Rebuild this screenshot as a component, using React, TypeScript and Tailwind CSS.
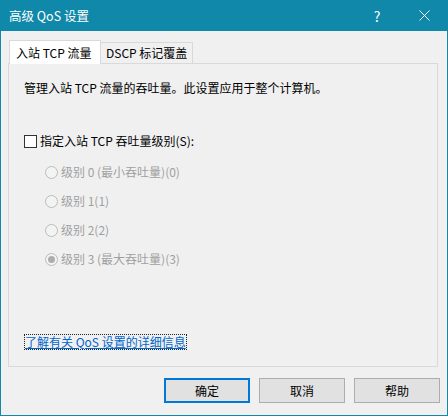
import React from "react";

const font = { fontFamily: '"Noto Sans CJK SC", "Noto Sans", sans-serif' };

function Radio({ label, checked }: { label: string; checked?: boolean }) {
  return (
    <div className="flex items-center h-[16px] ml-[21px]">
      <div className="w-[13px] h-[13px] rounded-full border border-[#bcbcbc] bg-[#f3f3f3] flex items-center justify-center">
        {checked && <div className="w-[7px] h-[7px] rounded-full bg-[#adadad]" />}
      </div>
      <span className="ml-[3px] text-[12px] leading-[16px] text-[#a0a0a0]">{label}</span>
    </div>
  );
}

export default function App() {
  return (
    <div
      className="w-[448px] h-[416px] bg-[#1088a9] px-[1px] pb-[1px] flex flex-col select-none"
      style={font}
    >
      <div className="h-[31px] flex items-center text-white text-[12.5px] leading-[16px] shrink-0">
        <span className="ml-[8px] flex-1">高级 QoS 设置</span>
        <span className="w-[46px] text-center text-[14px] mr-[1px]">?</span>
        <span className="w-[46px] flex items-center justify-center">
          <svg width="11" height="11" viewBox="0 0 11 11">
            <path d="M0.5 0.5 L10.5 10.5 M10.5 0.5 L0.5 10.5" stroke="white" strokeWidth="1" />
          </svg>
        </span>
      </div>
      <div className="flex-1 bg-[#f0f0f0] flex flex-col pl-[7px] pr-[7px]">
        <div className="flex items-start mt-[9px] relative z-10 h-[24px] -mb-[1px]">
          <div className="ml-[1px] w-[92px] h-[24px] border border-b-0 border-[#d9d9d9] bg-white flex items-center pl-[6px] text-[12px] leading-[16px] text-black">
            入站 TCP 流量
          </div>
          <div className="mt-[2px] w-[92px] h-[21px] border border-l-0 border-b-0 border-[#d9d9d9] bg-[#f0f0f0] flex items-center pl-[5px] text-[12px] leading-[16px] text-black">
            DSCP 标记覆盖
          </div>
        </div>
        <div className="w-[430px] h-[304px] border border-[#d9d9d9] bg-[#f0f0f0] flex flex-col pl-[15px] pt-[16px] pb-[16px]">
          <div className="text-[12px] leading-[16px] text-black">
            管理入站 TCP 流量的吞吐量。此设置应用于整个计算机。
          </div>
          <div className="flex items-center h-[16px] mt-[37px]">
            <div className="w-[13px] h-[13px] border border-[#333333] bg-white" />
            <span className="ml-[3px] text-[12px] leading-[16px] text-black">指定入站 TCP 吞吐量级别(S):</span>
          </div>
          <div className="flex flex-col gap-[13px] mt-[15px]">
            <Radio label="级别 0 (最小吞吐量)(0)" />
            <Radio label="级别 1(1)" />
            <Radio label="级别 2(2)" />
            <Radio label="级别 3 (最大吞吐量)(3)" checked />
          </div>
          <div className="mt-auto flex">
            <span className="border border-dotted border-[#222] text-[12px] leading-[14px] text-[#0066cc] underline">
              了解有关 QoS 设置的详细信息
            </span>
          </div>
        </div>
        <div className="flex justify-end gap-[9px] mt-[11px]">
          <button className="w-[86px] h-[25px] border-2 border-[#0078d7] bg-[#e1e1e1] text-[12px] leading-[16px] text-black">
            确定
          </button>
          <button className="w-[86px] h-[25px] border border-[#adadad] bg-[#e1e1e1] text-[12px] leading-[16px] text-black">
            取消
          </button>
          <button className="w-[86px] h-[25px] border border-[#adadad] bg-[#e1e1e1] text-[12px] leading-[16px] text-black">
            帮助
          </button>
        </div>
      </div>
    </div>
  );
}
